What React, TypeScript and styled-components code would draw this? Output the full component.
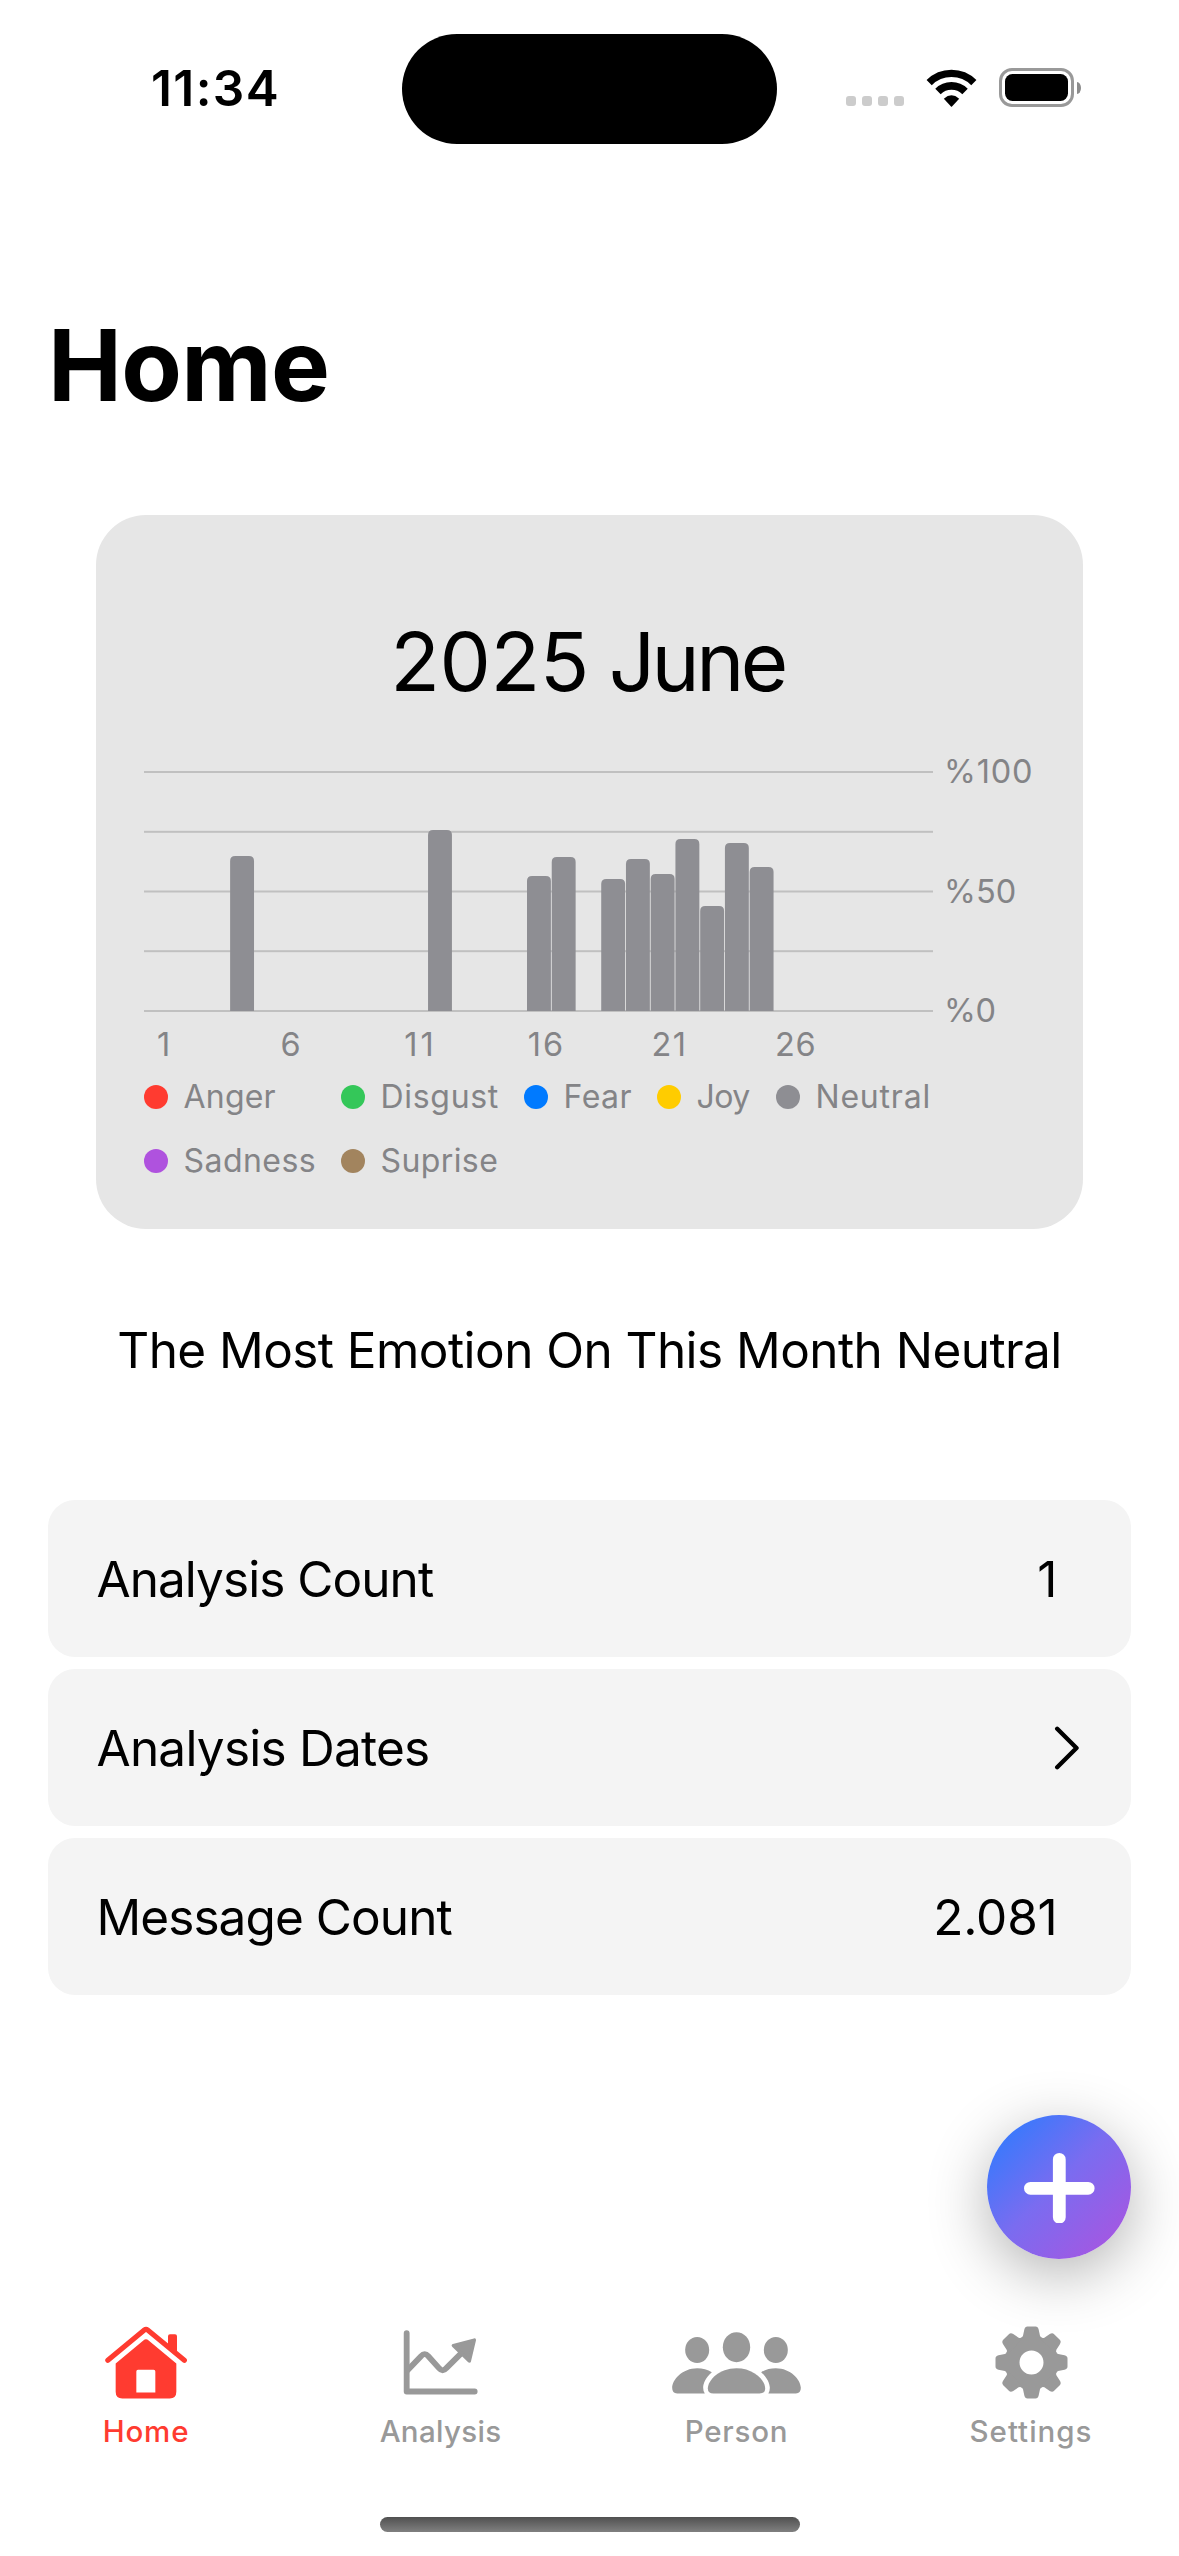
import React from "react";
import styled, { createGlobalStyle } from "styled-components";

const GlobalStyle = createGlobalStyle`
  * { box-sizing: border-box; }
  body { margin: 0; background: #ffffff; }
`;

const Screen = styled.main`
  display: flex;
  flex-direction: column;
  width: 1179px;
  height: 2556px;
  overflow: hidden;
  background: #ffffff;
  color: #000000;
  font-family: Inter, "Liberation Sans", sans-serif;
`;

const Text = styled.span<{ $track?: number }>`
  letter-spacing: ${(p) => p.$track ?? 0}px;
  white-space: nowrap;
`;

const StatusBar = styled.header`
  display: flex;
  align-items: center;
  flex: none;
  height: 177px;
  padding-left: 151px;
`;

const Clock = styled.div`
  width: 251px;
  margin-bottom: 2px;
  font-size: 49.5px;
  font-weight: 600;
  line-height: 60px;
`;

const Island = styled.div`
  width: 375px;
  height: 110px;
  margin-top: 1px;
  border-radius: 55px;
  background: #000000;
`;

const StatusIcons = styled.div`
  display: flex;
  align-items: center;
  gap: 22px;
  margin: 0 0 2px 69px;
`;

const Signal = styled.div`
  display: flex;
  gap: 6px;
  margin-top: 27px;
`;

const SignalDot = styled.i`
  width: 10px;
  height: 10px;
  border-radius: 3px;
  background: #cccccc;
`;

const Battery = styled.div`
  display: flex;
  align-items: center;
  gap: 3px;
`;

const BatteryShell = styled.div`
  width: 75px;
  height: 39px;
  padding: 3px;
  border: 3px solid #999999;
  border-radius: 13px;
`;

const BatteryLevel = styled.div`
  height: 27px;
  border-radius: 7.5px;
  background: #000000;
`;

const BatteryCap = styled.div`
  width: 4px;
  height: 12px;
  border-radius: 0 4px 4px 0 / 0 6px 6px 0;
  background: #8c8c8c;
`;

const PageTitle = styled.h1`
  flex: none;
  margin: 128px 0 0 48px;
  font-size: 99px;
  font-weight: 700;
  line-height: 120px;
`;

const Card = styled.section`
  display: flex;
  flex-direction: column;
  flex: none;
  width: 987px;
  height: 714px;
  margin: 90px 96px 0;
  padding: 98px 48px 0;
  border-radius: 50px;
  background: #e6e6e6;
  color: #848487;
  font-size: 32.5px;
`;

const CardTitle = styled.h2`
  display: flex;
  justify-content: center;
  gap: 20px;
  margin: 0 0 40px;
  padding-right: 4px;
  color: #000000;
  font-size: 81.5px;
  font-weight: 400;
  line-height: 98px;
`;

const Plot = styled.div`
  display: flex;
  height: 281px;
`;

const YAxis = styled.div`
  display: flex;
  flex-direction: column;
  justify-content: space-between;
  margin-left: 11px;
  line-height: 42px;
`;

const XAxis = styled.div`
  display: grid;
  grid-template-columns: repeat(6, 123.6px);
  padding: 1px 0 0 13px;
  line-height: 24px;
`;

const Legend = styled.div`
  display: grid;
  grid-template-columns: 197px 183px 133px 119px auto;
  row-gap: 24px;
  margin-top: 20px;
  font-size: 32px;
  line-height: 40px;
`;

const LegendItem = styled.div`
  display: flex;
  align-items: center;
  gap: 15.5px;
`;

const LegendDot = styled.i<{ $color: string }>`
  width: 24px;
  height: 24px;
  border-radius: 50%;
  background: ${(p) => p.$color};
`;

const Summary = styled.p`
  flex: none;
  margin: 91px 0 120px;
  font-size: 49.5px;
  line-height: 60px;
  text-align: center;
`;

const Rows = styled.section`
  display: flex;
  flex-direction: column;
  flex: none;
  gap: 12px;
  padding: 0 48px;
`;

const Row = styled.div`
  display: flex;
  align-items: center;
  justify-content: space-between;
  height: 157px;
  padding: 0 51px 0 49.5px;
  border-radius: 27px;
  background: #f4f4f4;
  font-size: 49.5px;
  line-height: 60px;
`;

const RowLabel = styled(Text)`
  margin-left: -1px;
`;

const RowValue = styled(Text)`
  margin-right: 22.5px;
`;

const AddButton = styled.button`
  display: flex;
  align-items: center;
  justify-content: center;
  flex: none;
  align-self: flex-end;
  width: 144px;
  height: 144px;
  margin: 120px 48px 0 0;
  padding: 0;
  border: 0;
  border-radius: 50%;
  background: linear-gradient(135deg, #2a7cff 4%, #7a6cf0 48%, #af52de 100%);
  box-shadow: 0 15px 60px rgba(0, 0, 0, 0.3);
`;

const TabBar = styled.nav`
  display: grid;
  grid-template-columns: 292px 297px 295px 294px;
  flex: none;
  margin-top: 67px;
`;

const Tab = styled.div<{ $active?: boolean }>`
  display: flex;
  flex-direction: column;
  align-items: center;
  color: ${(p) => (p.$active ? "#ff3b30" : "#999999")};
  font-size: 29.5px;
  font-weight: 500;
  line-height: 36px;
`;

const TabIcon = styled.div`
  display: flex;
  align-items: center;
  height: 73px;
  margin-bottom: 14px;
`;

const HomeIndicator = styled.div`
  flex: none;
  align-self: center;
  width: 420px;
  height: 15px;
  margin-top: 68px;
  border-radius: 8px;
  background: linear-gradient(#505050, #808080);
`;

const WifiIcon = () => (
  <svg width="51" height="38" viewBox="438.5 85 153 114" fill="none" stroke="#000">
    <path d="M448 126A95 95 0 0 1 582 126" strokeWidth="22" />
    <path d="M474.4 152.4A57.5 57.5 0 0 1 555.6 152.4" strokeWidth="23" />
    <path d="M492 174Q515 154 538 174L516.500 197.500Q515 199 513.500 197.500Z" fill="#000" stroke="none" />
  </svg>
);

const HomeIcon = () => (
  <svg width="82" height="73" viewBox="134 79.500 246 219" fill="none">
    <path d="M142.500 182.500L252 91.500Q257 87.500 262 91.500L372 182.500" stroke="currentColor" strokeWidth="15.500" strokeLinecap="round" strokeLinejoin="round" />
    <path d="M323 140V110Q323 104 329 104H344Q350 104 350 110V162Z" fill="currentColor" />
    <path fillRule="evenodd" fill="currentColor" d="M166 192L249 123Q257 116 265 123L348 192V277Q348 297 328 297H186Q166 297 166 277ZM228 279H285V216Q285 211 280 211H233Q228 211 228 216Z" />
  </svg>
);

const AnalysisIcon = () => (
  <svg width="75" height="65" viewBox="1030 91.500 225 195" fill="none" stroke="currentColor" strokeWidth="17.500" strokeLinecap="round" strokeLinejoin="round">
    <path d="M1041 101V276H1245" />
    <path d="M1043 213L1084 170Q1095 158 1106 170L1138 206Q1149 219 1160 206L1212 154" />
    <path d="M1181 138L1244 121.500L1229 184.500Z" fill="currentColor" strokeWidth="10" />
  </svg>
);

const PersonIcon = () => (
  <svg width="129" height="62" viewBox="158.500 95.500 387 186" fill="currentColor">
    <ellipse cx="234" cy="149.500" rx="36" ry="39" />
    <ellipse cx="470" cy="149.500" rx="36" ry="39" />
    <ellipse cx="352" cy="141" rx="41" ry="45" />
    <path d="M283 280Q266 280 266 265C266 240 300 204 352 204S438 240 438 265Q438 280 421 280Z" />
    <path d="M174 280Q159 280 159 263C159 238 190 204 234 204C250 204 266 208 278 216C260 231 252 249 252 263Q252 274 257 280Z" />
    <path d="M530 280Q545 280 545 263C545 238 514 204 470 204C454 204 438 208 426 216C443 231 452 249 452 263Q452 274 447.500 280Z" />
  </svg>
);

const GearIcon = () => (
  <svg width="73" height="73" viewBox="-109.500 -109.500 219 219" fill="currentColor">
    <path fillRule="evenodd" d="M0 -77A77 77 0 1 1 0 77A77 77 0 1 1 0 -77ZM0 -36A36 36 0 1 0 0 36A36 36 0 1 0 0 -36Z" />
    {[0, 45, 90, 135, 180, 225, 270, 315].map((angle) => (
      <path
        key={angle}
        transform={`rotate(${angle})`}
        d="M-35 -69L-34 -73Q-27 -75 -25.500 -80L-21.500 -99Q-19.500 -108 -12 -108H12Q19.500 -108 21.500 -99L25.500 -80Q27 -75 34 -73L35 -69Z"
      />
    ))}
  </svg>
);

const ChevronIcon = () => (
  <svg width="26" height="44" viewBox="0 0 26 44" fill="none" stroke="#000" strokeWidth="4.400" strokeLinecap="round" strokeLinejoin="round">
    <path d="M3.200 2.800L22.500 22L3.200 41.200" />
  </svg>
);

const PlusIcon = () => (
  <svg width="72" height="72" viewBox="0 0 72 72" stroke="#fff" strokeWidth="12.800" strokeLinecap="round">
    <path d="M36.300 8.400V66.200M7.400 37.300H65.200" />
  </svg>
);

const bars = [
  { day: 4, height: 155 },
  { day: 12, height: 181 },
  { day: 16, height: 135 },
  { day: 17, height: 154 },
  { day: 19, height: 132 },
  { day: 20, height: 152 },
  { day: 21, height: 137 },
  { day: 22, height: 172 },
  { day: 23, height: 105 },
  { day: 24, height: 168 },
  { day: 25, height: 144 },
];

const BASELINE = 260;
const DAY_WIDTH = 24.74;

const EmotionBars = () => (
  <svg width="789" height="281" viewBox="0 0 789 281">
    {[20, 79.800, 139.500, 199.200, 259].map((y) => (
      <rect key={y} x="0" y={y} width="789" height="2" fill="#c0c0c0" />
    ))}
    {bars.map(({ day, height }) => {
      const x = 11.900 + (day - 1) * DAY_WIDTH;
      return (
        <path
          key={day}
          fill="#8e8e93"
          d={`M${x} ${BASELINE}v${5 - height}q0 -5 5 -5h13.900q5 0 5 5v${height - 5}z`}
        />
      );
    })}
  </svg>
);

const yLabels = [
  { text: "%100", track: 0.79 },
  { text: "%50", track: 0 },
  { text: "%0", track: -0.4 },
];

const xLabels = [
  { text: "1", track: 0 },
  { text: "6", track: 0 },
  { text: "11", track: 3 },
  { text: "16", track: 2 },
  { text: "21", track: 1.6 },
  { text: "26", track: 0.6 },
];

const emotions = [
  { name: "Anger", color: "#ff3b30", track: 0.2 },
  { name: "Disgust", color: "#34c759", track: 0.7 },
  { name: "Fear", color: "#007aff", track: 0.5 },
  { name: "Joy", color: "#ffcc00", track: -0.6 },
  { name: "Neutral", color: "#8e8e93", track: 0.8 },
  { name: "Sadness", color: "#af52de", track: 0.45 },
  { name: "Suprise", color: "#a2845e", track: 0.4 },
];

const tabs = [
  { name: "Home", track: 0.84, Icon: HomeIcon, active: true },
  { name: "Analysis", track: 0.31, Icon: AnalysisIcon },
  { name: "Person", track: 0.76, Icon: PersonIcon },
  { name: "Settings", track: 0.99, Icon: GearIcon },
];

export default function App() {
  return (
    <Screen>
      <GlobalStyle />
      <StatusBar>
        <Clock>
          <Text $track={1.4}>11:34</Text>
        </Clock>
        <Island />
        <StatusIcons>
          <Signal>
            <SignalDot />
            <SignalDot />
            <SignalDot />
            <SignalDot />
          </Signal>
          <WifiIcon />
          <Battery>
            <BatteryShell>
              <BatteryLevel />
            </BatteryShell>
            <BatteryCap />
          </Battery>
        </StatusIcons>
      </StatusBar>

      <PageTitle>
        <Text $track={-0.67}>Home</Text>
      </PageTitle>

      <Card>
        <CardTitle>
          <Text $track={-0.5}>2025</Text>
          <Text $track={-3.6}>June</Text>
        </CardTitle>
        <Plot>
          <EmotionBars />
          <YAxis>
            {yLabels.map((l) => (
              <Text key={l.text} $track={l.track}>{l.text}</Text>
            ))}
          </YAxis>
        </Plot>
        <XAxis>
          {xLabels.map((l) => (
            <Text key={l.text} $track={l.track}>{l.text}</Text>
          ))}
        </XAxis>
        <Legend>
          {emotions.map((e) => (
            <LegendItem key={e.name}>
              <LegendDot $color={e.color} />
              <Text $track={e.track}>{e.name}</Text>
            </LegendItem>
          ))}
        </Legend>
      </Card>

      <Summary>
        <Text $track={-0.56}>The Most Emotion On This Month Neutral</Text>
      </Summary>

      <Rows>
        <Row>
          <RowLabel $track={-0.95}>Analysis Count</RowLabel>
          <RowValue>1</RowValue>
        </Row>
        <Row>
          <RowLabel $track={-0.77}>Analysis Dates</RowLabel>
          <ChevronIcon />
        </Row>
        <Row>
          <RowLabel $track={-0.93}>Message Count</RowLabel>
          <RowValue $track={-0.2}>2.081</RowValue>
        </Row>
      </Rows>

      <AddButton aria-label="Add">
        <PlusIcon />
      </AddButton>

      <TabBar>
        {tabs.map(({ name, track, Icon, active }) => (
          <Tab key={name} $active={active}>
            <TabIcon>
              <Icon />
            </TabIcon>
            <Text $track={track}>{name}</Text>
          </Tab>
        ))}
      </TabBar>

      <HomeIndicator />
    </Screen>
  );
}
